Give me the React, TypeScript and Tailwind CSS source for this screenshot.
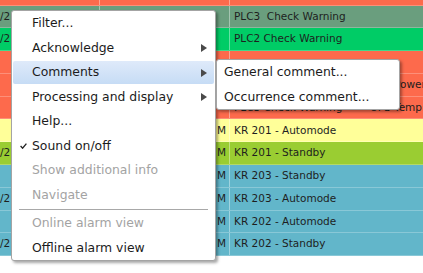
import React from "react";

type Row = {
  bg: string;
  date?: string;
  time?: string;
  msg?: string;
  extra?: string;
};

const rows: Row[] = [
  { bg: "bg-[#fd6a4c]" },
  { bg: "bg-[#6a9e7e]", date: "/2", msg: "PLC3  Check Warning" },
  { bg: "bg-[#00cc66]", date: "/2", msg: "PLC2 Check Warning" },
  { bg: "bg-[#fd6a4c]" },
  { bg: "bg-[#fd6a4c]", msg: "PLC3 Check Warning", extra: "UPS Power" },
  { bg: "bg-[#fd6a4c]", msg: "PLC3 Check Warning", extra: "UPS Temp:" },
  { bg: "bg-[#ffff99]", time: "M", msg: "KR 201 - Automode" },
  { bg: "bg-[#9acd32]", date: "/2", time: "M", msg: "KR 201 - Standby" },
  { bg: "bg-[#62b6ca]", time: "M", msg: "KR 203 - Standby" },
  { bg: "bg-[#62b6ca]", date: "/2", time: "M", msg: "KR 203 - Automode" },
  { bg: "bg-[#62b6ca]", time: "M", msg: "KR 202 - Automode" },
  { bg: "bg-[#62b6ca]", date: "/2", time: "M", msg: "KR 202 - Standby" },
];

function Arrow() {
  return (
    <svg width="6" height="8" viewBox="0 0 6 8" className="absolute right-[7px]">
      <polygon points="0,0 6,4 0,8" fill="#4a4a4a" />
    </svg>
  );
}

function Check() {
  return (
    <svg width="7" height="6" viewBox="0 0 7 6" className="absolute left-[7px]">
      <polyline points="0.6,3 2.6,5.2 6.4,0.6" fill="none" stroke="#222" strokeWidth="1.3" />
    </svg>
  );
}

function Item({
  label,
  sub,
  active,
  disabled,
  checked,
  pad = "pl-[19px]",
}: {
  label: string;
  sub?: boolean;
  active?: boolean;
  disabled?: boolean;
  checked?: boolean;
  pad?: string;
}) {
  return (
    <div className="h-[24.5px] p-px">
      <div
        className={`relative h-full flex items-center rounded-[2px] pt-px ${pad} ${
          active ? "bg-gradient-to-b from-[#dfeafa] to-[#c6dcf5]" : ""
        } ${disabled ? "text-[#a3a3a3]" : "text-[#1c1c1c]"}`}
      >
        {checked && <Check />}
        <span className="whitespace-pre">{label}</span>
        {sub && <Arrow />}
      </div>
    </div>
  );
}

export default function App() {
  return (
    <div className="relative w-[423px] h-[273px] overflow-hidden bg-white font-['DejaVu_Sans',Verdana,sans-serif]">
      {/* alarm table */}
      <div className="-mt-[17.3px] text-[10.5px] text-[#1e1e1e]">
        {rows.map((r, i) => (
          <div key={i} className={`flex h-[22.8px] border-b border-white/25 ${r.bg}`}>
            <div className="w-[100px] flex items-center border-r border-white/40 whitespace-pre overflow-hidden">
              {r.date}
            </div>
            <div className="w-[130px] flex items-center justify-end pr-[3px] border-r border-white/40">
              {r.time}
            </div>
            <div className="w-[136px] flex items-center pl-[4px] whitespace-pre overflow-hidden">
              {r.msg}
            </div>
            <div className="flex-1 flex items-center pl-[4px] whitespace-pre overflow-hidden">
              {r.extra}
            </div>
          </div>
        ))}
      </div>

      {/* context menu */}
      <div className="absolute left-[11px] top-[10px] w-[205px] bg-white border border-[#a4a4a4] rounded-[3px] shadow-[2px_2px_3px_rgba(0,0,0,0.35)] text-[12.4px]">
        <Item label="Filter..." />
        <Item label="Acknowledge" sub />
        <Item label="Comments" sub active />
        <Item label="Processing and display" sub />
        <Item label="Help..." />
        <Item label="Sound on/off" checked />
        <Item label="Show additional info" disabled />
        <Item label="Navigate" disabled />
        <div className="h-[4px] pt-[2px]">
          <div className="ml-[7px] mr-[7px] h-px bg-[#a8a8a8]" />
        </div>
        <Item label="Online alarm view" disabled />
        <Item label="Offline alarm view" />
      </div>

      {/* comments submenu */}
      <div className="absolute left-[216px] top-[59px] w-[184px] bg-white border border-[#a4a4a4] rounded-[3px] shadow-[2px_2px_3px_rgba(0,0,0,0.35)] text-[12.4px]">
        <Item label="General comment..." pad="pl-[6px]" />
        <Item label="Occurrence comment..." pad="pl-[6px]" />
      </div>
    </div>
  );
}
